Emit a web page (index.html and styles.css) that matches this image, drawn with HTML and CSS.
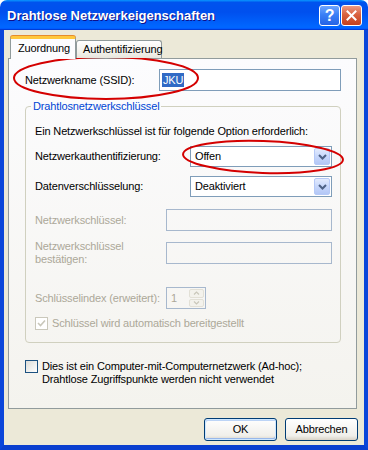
FILE: index.html
```html
<!DOCTYPE html>
<html lang="de">
    <head>
        <meta charset="UTF-8">
        <title>Drahtlose Netzwerkeigenschaften</title>
        <link rel="stylesheet" href="styles.css">
    </head>

    <body>
        <div class="window">
            <header class="window__title">
                <span class="window__title__text">Drahtlose Netzwerkeigenschaften</span>
                <span class="window__title__btn window__title__btn--help">?</span>
                <span class="window__title__btn window__title__btn--close">
                    <svg width="11" height="11" viewBox="0 0 11 11"><path d="M1.5 1.5 L9.5 9.5 M9.5 1.5 L1.5 9.5" stroke="#fff" stroke-width="2" stroke-linecap="square"/></svg>
                </span>
            </header>

            <div class="window__body">
                <ul class="tabs">
                    <li class="tabs__tab tabs__tab--active">Zuordnung</li>
                    <li class="tabs__tab">Authentifizierung</li>
                </ul>

                <section class="panel">
                    <div class="panel__row">
                        <span class="panel__label">Netzwerkname (SSID):</span>
                        <span class="input input--ssid"><span class="input__selection">JKU</span></span>
                    </div>

                    <fieldset class="group">
                        <legend class="group__title">Drahtlosnetzwerkschlüssel</legend>
                        <p class="group__intro">Ein Netzwerkschlüssel ist für folgende Option erforderlich:</p>

                        <div class="field field--auth">
                            <span class="field__label">Netzwerkauthentifizierung:</span>
                            <span class="combo">
                                <span class="combo__value">Offen</span>
                                <span class="combo__button"><svg width="9" height="6" viewBox="0 0 9 6"><path d="M1 1 L4.5 4.5 L8 1" fill="none" stroke="#4d6185" stroke-width="2"/></svg></span>
                            </span>
                        </div>

                        <div class="field field--crypt">
                            <span class="field__label">Datenverschlüsselung:</span>
                            <span class="combo">
                                <span class="combo__value">Deaktiviert</span>
                                <span class="combo__button"><svg width="9" height="6" viewBox="0 0 9 6"><path d="M1 1 L4.5 4.5 L8 1" fill="none" stroke="#4d6185" stroke-width="2"/></svg></span>
                            </span>
                        </div>

                        <div class="field field--key">
                            <span class="field__label field__label--disabled">Netzwerkschlüssel:</span>
                            <span class="input input--disabled input--key"></span>
                        </div>

                        <div class="field field--confirm">
                            <span class="field__label field__label--disabled">Netzwerkschlüssel<br>bestätigen:</span>
                            <span class="input input--disabled input--key"></span>
                        </div>

                        <div class="field field--index">
                            <span class="field__label field__label--disabled field__label--fixed">Schlüsselindex (erweitert):</span>
                            <span class="input input--disabled spin">
                                <span class="spin__value">1</span>
                                <span class="spin__buttons">
                                    <span class="spin__btn"><svg width="7" height="4" viewBox="0 0 7 4"><path d="M1 3.5 L3.5 1 L6 3.5" fill="none" stroke="#c9c7ba" stroke-width="1.2"/></svg></span>
                                    <span class="spin__btn"><svg width="7" height="4" viewBox="0 0 7 4"><path d="M1 0.5 L3.5 3 L6 0.5" fill="none" stroke="#c9c7ba" stroke-width="1.2"/></svg></span>
                                </span>
                            </span>
                        </div>

                        <div class="check check--auto">
                            <span class="check__box check__box--disabled">
                                <svg width="9" height="9" viewBox="0 0 9 9"><path d="M1 4 L3.5 6.5 L8 1.5" fill="none" stroke="#c9c7ba" stroke-width="1.6"/></svg>
                            </span>
                            <span class="check__label field__label--disabled">Schlüssel wird automatisch bereitgestellt</span>
                        </div>
                    </fieldset>

                    <div class="check check--adhoc">
                        <span class="check__box"></span>
                        <span class="check__label">Dies ist ein Computer-mit-Computernetzwerk (Ad-hoc);<br>Drahtlose Zugriffspunkte werden nicht verwendet</span>
                    </div>
                </section>

                <footer class="buttons">
                    <span class="button button--default">OK</span>
                    <span class="button">Abbrechen</span>
                </footer>
            </div>

            <svg class="marks" width="368" height="450" viewBox="0 0 368 450">
                <ellipse cx="106" cy="78" rx="92" ry="21" fill="none" stroke="#d40000" stroke-width="2"/>
                <ellipse cx="263" cy="157" rx="80" ry="16" fill="none" stroke="#d40000" stroke-width="2" transform="rotate(2 263 157)"/>
            </svg>
        </div>
    </body>
</html>
```

FILE: styles.css
```css
html,
body {
    margin: 0;
    padding: 0;
}

body {
    background: #ffffff;
    color: #000000;
    font: 11px/13px "Liberation Sans", Arial, sans-serif;
    letter-spacing: -0.15px;
}

:root {
    --color-face: #ece9d8;
    --color-tab-border: #919b9c;
    --color-input-border: #7f9db9;
    --color-disabled: #aca899;
    --color-group-border: #d0d0bf;
}

.window {
    display: flex;
    flex-direction: column;
    height: 450px;
    position: relative;
    width: 368px;
}

/* title bar */

.window__title {
    align-items: center;
    background: linear-gradient(to bottom, #0997ff 0%, #0053ee 8%, #0050ee 40%, #0066ff 88%, #0066ff 93%, #005bff 95%, #003dd7 96%, #003dd7 100%);
    border-radius: 7px 7px 0 0;
    box-sizing: border-box;
    color: #ffffff;
    display: flex;
    flex: 0 0 30px;
    padding: 0 6px 0 7px;
}

.window__title__text {
    flex: 1;
    font-size: 13px;
    font-weight: bold;
    letter-spacing: 0;
    text-shadow: 1px 1px #0f1089;
}

.window__title__btn {
    align-items: center;
    border: 1px solid #ffffff;
    border-radius: 3px;
    box-sizing: border-box;
    display: flex;
    height: 21px;
    justify-content: center;
    margin-left: 1px;
    width: 21px;
}

.window__title__btn--help {
    background: linear-gradient(to bottom, #6ea6ff 0%, #3a80f6 45%, #2563e6 100%);
    font-size: 16px;
    font-weight: bold;
}

.window__title__btn--close {
    background: linear-gradient(to bottom, #eb9a84 0%, #d9623f 45%, #c4401d 100%);
}

/* window body */

.window__body {
    background: var(--color-face);
    border-color: #0b4ce4 #0b46da #0a3fcf;
    border-style: solid;
    border-width: 0 4px 5px 4px;
    display: flex;
    flex: 1;
    flex-direction: column;
    padding: 6px 0 0 4px;
}

/* tabs */

.tabs {
    align-items: flex-end;
    display: flex;
    height: 22px;
    list-style: none;
    margin: 0 0 0 2px;
    padding: 0;
    position: relative;
    z-index: 1;
}

.tabs__tab {
    background: linear-gradient(to bottom, #ffffff, #f1f0ea 70%, #e8e6dd);
    border: 1px solid var(--color-tab-border);
    border-bottom: none;
    border-radius: 3px 3px 0 0;
    box-sizing: border-box;
    height: 18px;
    line-height: 16px;
    padding: 0 6px;
    width: 86px;
}

.tabs__tab--active {
    background: #fcfcfe;
    border-top: 3px solid #ffc83c;
    box-shadow: 0 -1px #e68b2c;
    height: 23px;
    line-height: 18px;
    margin-bottom: -1px;
    padding: 0 7px;
    width: 66px;
}

/* tab panel */

.panel {
    background: linear-gradient(to bottom, #fcfcfe, #f4f3ee);
    border: 1px solid var(--color-tab-border);
    box-sizing: border-box;
    height: 351px;
    padding: 10px 15px 0 16px;
    width: 349px;
}

.panel__row {
    align-items: center;
    display: flex;
    justify-content: space-between;
}

/* inputs */

.input {
    align-items: center;
    background: #ffffff;
    border: 1px solid var(--color-input-border);
    box-sizing: border-box;
    display: flex;
    height: 22px;
    padding-left: 2px;
}

.input--ssid {
    width: 182px;
}

.input__selection {
    background: #316ac5;
    color: #ffffff;
    line-height: 14px;
    padding: 0 1px;
}

.input--disabled {
    background: transparent;
    border-color: #a7b8cd;
}

.input--key {
    width: 166px;
}

/* group box */

.group {
    border: 1px solid var(--color-group-border);
    border-radius: 4px;
    margin: 9px 0 0 0;
    min-width: 0;
    padding: 0 8px 12px 9px;
}

.group__title {
    color: #0046d5;
    line-height: 13px;
    margin-left: -4px;
    padding: 0 2px;
}

.group__intro {
    margin: 12px 0 0 0;
}

.field {
    align-items: center;
    display: flex;
}

.field__label {
    flex: 1;
}

.field__label--fixed {
    flex: 0 0 131px;
}

.field__label--disabled {
    color: var(--color-disabled);
}

.field--auth {
    margin-top: 8px;
}

.field--crypt {
    margin-top: 9px;
}

.field--key {
    margin-top: 12px;
}

.field--confirm {
    margin-top: 9px;
}

.field--index {
    margin-top: 21px;
}

/* combo boxes */

.combo {
    align-items: center;
    background: #ffffff;
    border: 1px solid var(--color-input-border);
    box-sizing: border-box;
    display: flex;
    height: 21px;
    padding: 1px;
    width: 142px;
}

.combo__value {
    flex: 1;
    padding-left: 3px;
}

.combo__button {
    align-items: center;
    background: linear-gradient(to bottom, #e3ebfd 0%, #c7d7fb 50%, #b3c7f6 100%);
    border: 1px solid #b6c9f7;
    border-radius: 2px;
    box-sizing: border-box;
    display: flex;
    height: 17px;
    justify-content: center;
    width: 16px;
}

/* spin box */

.spin {
    justify-content: space-between;
    padding: 1px 1px 1px 4px;
    width: 40px;
}

.spin__value {
    color: var(--color-disabled);
}

.spin__buttons {
    display: flex;
    flex-direction: column;
    gap: 1px;
    height: 100%;
}

.spin__btn {
    align-items: center;
    background: #f3f2ec;
    border: 1px solid #e2e0d6;
    border-radius: 2px;
    box-sizing: border-box;
    display: flex;
    flex: 1;
    justify-content: center;
    width: 15px;
}

/* check boxes */

.check {
    align-items: flex-start;
    display: flex;
}

.check--auto {
    align-items: center;
    margin-top: 8px;
}

.check--adhoc {
    margin-top: 17px;
}

.check__box {
    align-items: center;
    background: linear-gradient(135deg, #dcdcd7, #ffffff);
    border: 1px solid #1c5180;
    box-sizing: border-box;
    display: flex;
    flex: 0 0 13px;
    height: 13px;
    justify-content: center;
    margin-right: 4px;
}

.check__box--disabled {
    background: #ffffff;
    border-color: #cac8bb;
}

/* dialog buttons */

.buttons {
    display: flex;
    gap: 8px;
    justify-content: flex-end;
    margin-top: 9px;
    padding-right: 6px;
}

.button {
    align-items: center;
    background: linear-gradient(to bottom, #ffffff, #f0efea 80%, #d8d2c6);
    border: 1px solid #003c74;
    border-radius: 3px;
    box-sizing: border-box;
    display: flex;
    height: 23px;
    justify-content: center;
    width: 73px;
}

.button--default {
    box-shadow: inset 0 0 0 1px #cee7ff, inset -1px -2px #98b8ea, inset 1px 2px #bcd4f6;
}

/* red annotations drawn over the dialog */

.marks {
    left: 0;
    pointer-events: none;
    position: absolute;
    top: 0;
}
```
